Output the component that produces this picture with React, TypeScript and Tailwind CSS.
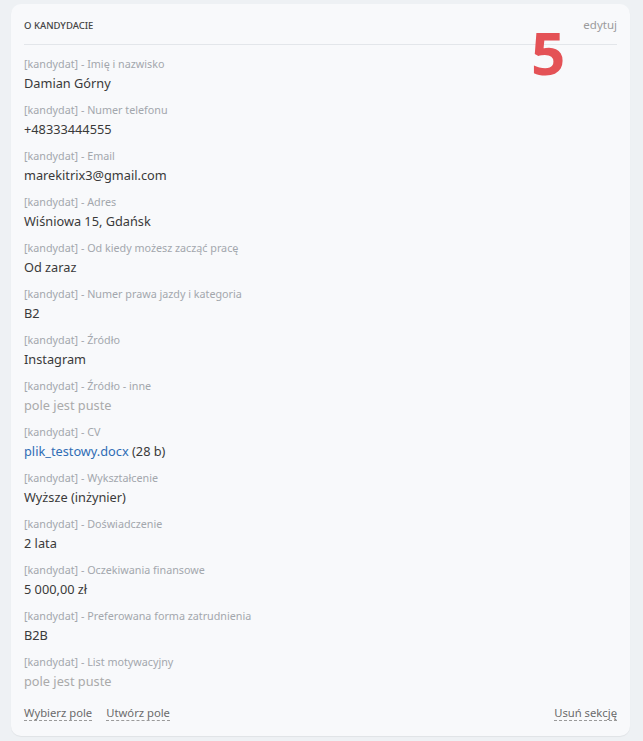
import type { ReactNode } from "react";

type Field = {
  label: string;
  value?: ReactNode;
};

const fields: Field[] = [
  { label: "Imię i nazwisko", value: "Damian Górny" },
  { label: "Numer telefonu", value: "+48333444555" },
  { label: "Email", value: "marekitrix3@gmail.com" },
  { label: "Adres", value: "Wiśniowa 15, Gdańsk" },
  { label: "Od kiedy możesz zacząć pracę", value: "Od zaraz" },
  { label: "Numer prawa jazdy i kategoria", value: "B2" },
  { label: "Źródło", value: "Instagram" },
  { label: "Źródło - inne" },
  {
    label: "CV",
    value: (
      <>
        <a className="text-[#2f6db5]">plik_testowy.docx</a> (28 b)
      </>
    ),
  },
  { label: "Wykształcenie", value: "Wyższe (inżynier)" },
  { label: "Doświadczenie", value: "2 lata" },
  { label: "Oczekiwania finansowe", value: "5 000,00 zł" },
  { label: "Preferowana forma zatrudnienia", value: "B2B" },
  { label: "List motywacyjny" },
];

function FooterLink({ children }: { children: ReactNode }) {
  return (
    <span className="cursor-pointer border-b border-dashed border-[#9a9a9a] leading-[15px] text-[#6b6b6b]">
      {children}
    </span>
  );
}

export default function App() {
  return (
    <div
      className="min-h-[741px] bg-[#eef1f4] pl-[11px] pr-[13px] pt-[4px] pb-[8px]"
      style={{ fontFamily: '"Noto Sans", "Open Sans", sans-serif' }}
    >
      <div className="relative rounded-[10px] bg-[#f8f9fb] px-[13px] pt-[14px] pb-[15px] shadow-[0_1px_1px_rgba(0,0,0,0.06)]">
        <div className="flex items-start justify-between border-b border-[#e3e6ea] pb-[10px]">
          <h2 className="text-[9.5px] font-medium uppercase leading-4 text-[#444]">
            O kandydacie
          </h2>
          <button type="button" className="-mt-[1px] text-[11.5px] leading-4 text-[#9b9b9b]">
            edytuj
          </button>
        </div>

        <span className="pointer-events-none absolute left-[520px] top-[18px] text-[60px] font-bold leading-[60px] text-[#e45256]">
          5
        </span>

        <div className="flex flex-col gap-[9px] pt-[11px]">
          {fields.map((field) => (
            <div key={field.label}>
              <p className="text-[10.75px] leading-[17px] text-[#a3a7ad]">
                [kandydat] - {field.label}
              </p>
              {field.value ? (
                <p className="text-[12.75px] leading-5 text-[#3a3a3a]">{field.value}</p>
              ) : (
                <p className="text-[12.75px] leading-5 text-[#aaaaaa]">pole jest puste</p>
              )}
            </div>
          ))}
        </div>

        <div className="mt-[14px] flex items-center justify-between text-[11.25px]">
          <div className="flex gap-[14px]">
            <FooterLink>Wybierz pole</FooterLink>
            <FooterLink>Utwórz pole</FooterLink>
          </div>
          <FooterLink>Usuń sekcję</FooterLink>
        </div>
      </div>
    </div>
  );
}
